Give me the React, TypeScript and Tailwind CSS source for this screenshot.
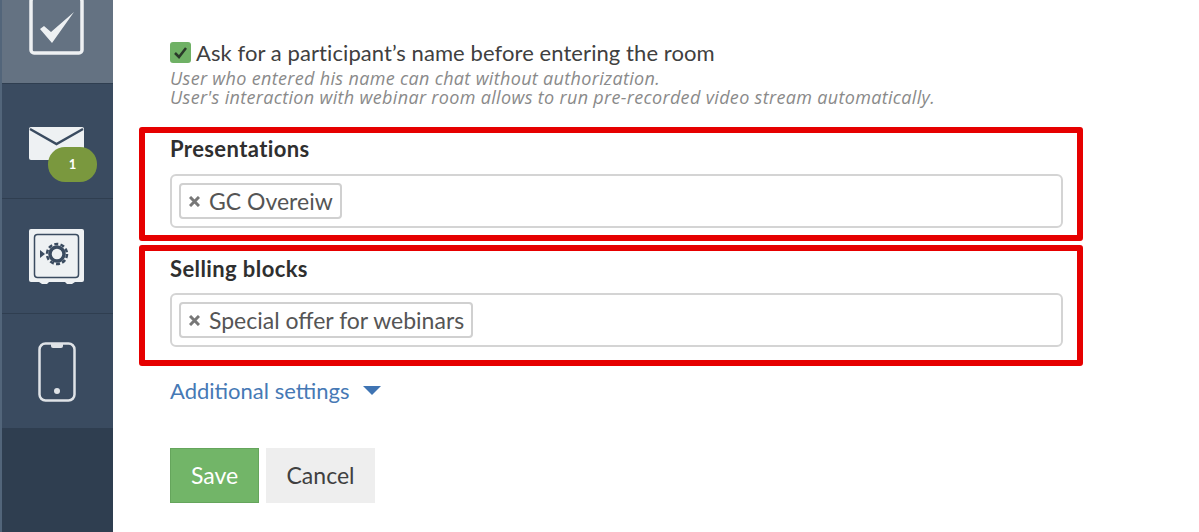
const font = { fontFamily: '"Lato", "Open Sans", sans-serif' };

function TagField({ label, tag, className, inputGap }: { label: string; tag: string; className: string; inputGap: string }) {
  return (
    <section className={`w-[944px] rounded-[3px] border-[6px] border-[#e60000] pl-[25px] pr-[14px] ${className}`}>
      <h3 className="text-[22px] leading-6 font-bold tracking-[0.4px] text-[#2f2f2f]">{label}</h3>
      <div className={`flex h-[54px] items-center rounded-[6px] border-2 border-[#d4d4d4] pl-[7px] ${inputGap}`}>
        <span className="flex h-9 items-center gap-[9px] rounded-[4px] border-2 border-[#d0d0d0] pl-2 pr-[7px] text-[23px] text-[#555]">
          <svg width="11" height="11" viewBox="0 0 11 11" fill="none">
            <path d="M1 1l9 9M10 1l-9 9" stroke="#777" strokeWidth="3" />
          </svg>
          {tag}
        </span>
      </div>
    </section>
  );
}

function CheckIcon() {
  return (
    <svg width="55" height="55" viewBox="0 0 55 55" fill="none">
      <rect x="2" y="-2" width="51" height="55" rx="3" stroke="#eef1f3" strokeWidth="3.500" />
      <path d="M11 29l4-3 7 6L45 12 23 43z" fill="#eef1f3" />
    </svg>
  );
}

function MailIcon() {
  return (
    <div className="relative h-[33px] w-[55px]">
      <svg width="55" height="33" viewBox="0 0 55 33">
        <path d="M0 2q0-2 2-2h51q2 0 2 2v29q0 2-2 2H2q-2 0-2-2z" fill="#eef1f3" />
        <path d="M1 2l26.500 15L54 2" fill="none" stroke="#3a4b60" strokeWidth="2.500" />
      </svg>
      <span className="absolute left-[19px] top-[20px] flex h-[35px] w-[49px] items-center justify-center rounded-[17px] bg-[#7a983e] text-[13px] font-bold text-white">
        1
      </span>
    </div>
  );
}

function SafeIcon() {
  return (
    <svg width="55" height="55" viewBox="0 0 55 55">
      <path d="M2 0h51q2 0 2 2v49q0 2-2 2h-7l-3 2h-5l-2-2H20l-2 2h-5l-3-2H2q-2 0-2-2V2q0-2 2-2z" fill="#eef1f3" />
      <rect x="5.500" y="5.500" width="44" height="43" rx="3" fill="none" stroke="#3a4b60" strokeWidth="1.500" />
      <circle cx="28" cy="25" r="7" fill="none" stroke="#3a4b60" strokeWidth="3.500" />
      <circle cx="28" cy="25" r="10" fill="none" stroke="#3a4b60" strokeWidth="2.500" strokeDasharray="4 2.300" />
      <path d="M11 21l5 4-5 4z" fill="#3a4b60" />
    </svg>
  );
}

function PhoneIcon() {
  return (
    <svg width="38" height="60" viewBox="0 0 38 60" fill="none">
      <rect x="1.500" y="1.500" width="35" height="57" rx="6" stroke="#dfe3e7" strokeWidth="2.500" />
      <path d="M13 2h12v2q0 2-2 2h-8q-2 0-2-2z" fill="#dfe3e7" />
      <circle cx="19" cy="49" r="3" fill="#dfe3e7" />
    </svg>
  );
}

export default function App() {
  return (
    <div className="flex h-[532px] w-[1199px] overflow-hidden bg-white" style={font}>
      <aside className="flex w-[113px] shrink-0 flex-col border-l-2 border-[#52657a] bg-[#2f3e50]">
        <div className="flex h-[84px] items-start justify-center border-b border-[#2f3e50] bg-[#647282] pr-[2px]">
          <CheckIcon />
        </div>
        <div className="flex h-[115px] items-start justify-center border-b border-[#2f3e50] bg-[#3a4b60] pt-[43px] pr-[2px]">
          <MailIcon />
        </div>
        <div className="flex h-[115px] items-start justify-center border-b border-[#2f3e50] bg-[#3a4b60] pt-[30px] pr-[2px]">
          <SafeIcon />
        </div>
        <div className="flex h-[114px] items-start justify-center bg-[#3a4b60] pt-[28px] pr-[2px]">
          <PhoneIcon />
        </div>
      </aside>

      <main className="flex-1 pl-[26px] pt-[41px]">
        <div className="pl-[31px]">
          <label className="flex h-[23px] items-center gap-[5px] text-[22px] tracking-[0.08px] text-[#404040]">
            <span className="flex h-[21px] w-[21px] items-center justify-center rounded-[3px] bg-[#6fb165]">
              <svg width="15" height="13" viewBox="0 0 15 13" fill="none">
                <path d="M2 7l4 4 7-9" stroke="#2a3a2a" strokeWidth="2.500" />
              </svg>
            </span>
            Ask for a participant’s name before entering the room
          </label>
          <p className="mt-[5px] text-[18px] leading-[19px] tracking-[0.33px] italic text-[#8a8a8a]" style={{ fontFamily: '"Open Sans", sans-serif' }}>
            User who entered his name can chat without authorization.
            <br />
            User's interaction with webinar room allows to run pre-recorded video stream automatically.
          </p>
        </div>

        <TagField label="Presentations" tag="GC Overeiw" inputGap="mt-[13px]" className="mt-[20px] h-[114px] pt-[4px]" />
        <TagField label="Selling blocks" tag="Special offer for webinars" inputGap="mt-[12px]" className="mt-[4px] h-[121px] pt-[6px]" />

        <div className="pl-[31px]">
          <a className="mt-[12px] flex h-6 items-center gap-[14px] text-[22px] text-[#4679b5]">
            Additional settings
            <span className="h-0 w-0 border-x-[9px] border-t-[9px] border-x-transparent border-t-[#3f74b3]" />
          </a>
          <div className="mt-[46px] flex gap-[7px] text-[23px]">
            <button className="h-[55px] w-[89px] border border-[#65a55c] bg-[#72b568] text-white">Save</button>
            <button className="h-[55px] w-[109px] bg-[#eeeeee] text-[#404040]">Cancel</button>
          </div>
        </div>
      </main>
    </div>
  );
}
